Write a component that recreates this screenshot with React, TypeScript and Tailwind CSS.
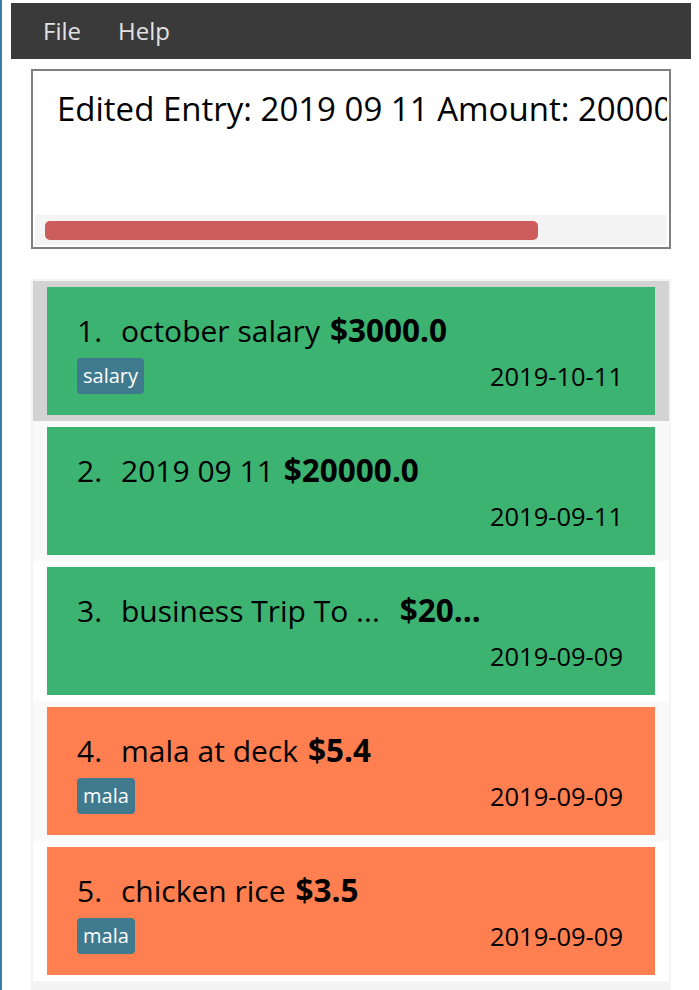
const entries = [
  { idx: "1.", desc: "october salary", amount: "$3000.0", tag: "salary", date: "2019-10-11", kind: "income", wide: false },
  { idx: "2.", desc: "2019 09 11", amount: "$20000.0", tag: "", date: "2019-09-11", kind: "income", wide: false },
  { idx: "3.", desc: "business Trip To ...", amount: "$20...", tag: "", date: "2019-09-09", kind: "income", wide: true },
  { idx: "4.", desc: "mala at deck", amount: "$5.4", tag: "mala", date: "2019-09-09", kind: "expense", wide: false },
  { idx: "5.", desc: "chicken rice", amount: "$3.5", tag: "mala", date: "2019-09-09", kind: "expense", wide: false },
];

const rowBg = ["bg-[#d3d3d3]", "bg-[#f9f9f9]", "bg-white", "bg-[#f9f9f9]", "bg-white"];

export default function App() {
  return (
    <div className="h-[990px] w-[699px] overflow-hidden bg-white border-l-2 border-[#3b7fa2] font-['Open_Sans',sans-serif] text-black">
      <div className="mt-[3px] ml-[9px] flex h-[56px] w-[680px] items-center gap-[37px] bg-[#3a3a3a] pl-[32px] text-[24px] text-[#e2e2e2]">
        <span>File</span>
        <span>Help</span>
      </div>

      <div className="mt-[10px] ml-[29px] flex h-[180px] w-[640px] flex-col border-2 border-[#808080] p-[2px]">
        <div className="flex-1 overflow-hidden whitespace-nowrap pl-[22px] pt-[14px] text-[33px] leading-[44px]">
          Edited Entry: 2019 09 11 Amount: 20000.0
        </div>
        <div className="flex h-[30px] items-center rounded-br-[3px] bg-[#f4f4f4] px-[10px]">
          <div className="h-[19px] w-[493px] rounded-[5px] bg-[#cd5c5c]" />
        </div>
      </div>

      <div className="mt-[30px] ml-[29px] h-[720px] w-[640px] bg-[#f4f4f4] p-[2px]">
        {entries.map((e, i) => (
          <div key={e.idx} className={`${rowBg[i]} px-[14px] py-[6px]`}>
            <div
              className={`flex h-[128px] flex-col pl-[30px] pr-[32px] pt-[24px] ${
                e.kind === "income" ? "bg-[#3cb371]" : "bg-[#ff7f50]"
              }`}
            >
              <div className="flex items-baseline whitespace-nowrap text-[30px] leading-[38px]">
                <span className="w-[44px]">{e.idx}</span>
                <span>{e.desc}</span>
                <span className={`${e.wide ? "ml-[20px]" : "ml-[10px]"} text-[31.5px] font-bold`}>{e.amount}</span>
              </div>
              <div className="mt-[8px] flex h-[36px] items-center justify-between">
                {e.tag ? (
                  <span className="flex h-[36px] items-center rounded-[4px] bg-[#3f7a8f] px-[6px] text-[20px] text-white">
                    {e.tag}
                  </span>
                ) : (
                  <span />
                )}
                <span className="text-[25.5px]">{e.date}</span>
              </div>
            </div>
          </div>
        ))}
      </div>
    </div>
  );
}
